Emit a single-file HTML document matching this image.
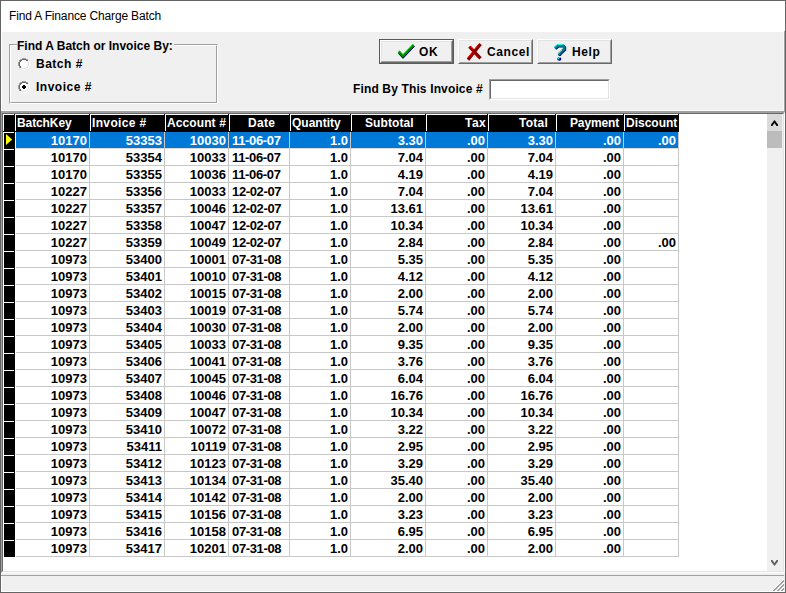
<!DOCTYPE html>
<html><head><meta charset="utf-8"><style>
*{box-sizing:border-box;margin:0;padding:0}
html,body{width:786px;height:593px;overflow:hidden;background:#f0f0f0}
body{position:relative;font-family:"Liberation Sans",sans-serif;}
.a{position:absolute}
.b{font-weight:bold;font-size:12px;color:#000;white-space:pre}
.hd{position:absolute;top:114px;height:17px;background:#000;border-left:1px solid #fff;border-top:1px solid #fff;color:#fff;font-weight:bold;font-size:12px;line-height:16px;white-space:pre;overflow:hidden}
.c{position:absolute;height:16px;line-height:16px;font-weight:bold;font-size:13px;white-space:pre;overflow:hidden}
.btn{position:absolute;top:39px;width:75px;height:25px;background:#f0f0f0}
</style></head><body>

<div class="a" style="left:0;top:0;width:786px;height:593px;border:1px solid #646464"></div>
<div class="a" style="left:1px;top:1px;width:784px;height:31px;background:#fff"></div>
<div class="a" style="left:9px;top:8px;font-size:12px;letter-spacing:-0.15px;line-height:16px;color:#000;white-space:pre">Find A Finance Charge Batch</div>
<div class="a" style="left:1px;top:32px;width:1px;height:560px;background:#fff"></div>
<div class="a" style="left:783px;top:32px;width:1px;height:79px;background:#fafafa"></div>
<div class="a" style="left:784px;top:31px;width:1px;height:80px;background:#a0a0a0"></div>
<div class="a" style="left:9px;top:44px;width:209px;height:60px;border:1px solid #a0a0a0;border-right-color:#fff;border-bottom-color:#fff"></div>
<div class="a" style="left:10px;top:45px;width:207px;height:58px;border:1px solid #fff;border-right-color:#a0a0a0;border-bottom-color:#a0a0a0"></div>
<div class="a b" style="left:17px;top:38px;line-height:16px;background:#f0f0f0;padding:0 1px 0 0">Find A Batch or Invoice By:</div>
<svg class="a" style="left:18px;top:58px" width="12" height="12" viewBox="0 0 12 12" shape-rendering="crispEdges"><rect x="4" y="2" width="4" height="1" fill="#fff"/><rect x="3" y="3" width="6" height="1" fill="#fff"/><rect x="2" y="4" width="8" height="1" fill="#fff"/><rect x="2" y="5" width="8" height="1" fill="#fff"/><rect x="2" y="6" width="8" height="1" fill="#fff"/><rect x="2" y="7" width="8" height="1" fill="#fff"/><rect x="3" y="8" width="6" height="1" fill="#fff"/><rect x="4" y="9" width="4" height="1" fill="#fff"/><rect x="4" y="0" width="1" height="1" fill="#a0a0a0"/><rect x="5" y="0" width="1" height="1" fill="#a0a0a0"/><rect x="6" y="0" width="1" height="1" fill="#a0a0a0"/><rect x="7" y="0" width="1" height="1" fill="#a0a0a0"/><rect x="2" y="1" width="1" height="1" fill="#a0a0a0"/><rect x="3" y="1" width="1" height="1" fill="#a0a0a0"/><rect x="8" y="1" width="1" height="1" fill="#a0a0a0"/><rect x="9" y="1" width="1" height="1" fill="#a0a0a0"/><rect x="1" y="2" width="1" height="1" fill="#a0a0a0"/><rect x="10" y="2" width="1" height="1" fill="#ffffff"/><rect x="1" y="3" width="1" height="1" fill="#a0a0a0"/><rect x="10" y="3" width="1" height="1" fill="#ffffff"/><rect x="0" y="4" width="1" height="1" fill="#a0a0a0"/><rect x="11" y="4" width="1" height="1" fill="#ffffff"/><rect x="0" y="5" width="1" height="1" fill="#a0a0a0"/><rect x="11" y="5" width="1" height="1" fill="#ffffff"/><rect x="0" y="6" width="1" height="1" fill="#a0a0a0"/><rect x="11" y="6" width="1" height="1" fill="#ffffff"/><rect x="0" y="7" width="1" height="1" fill="#a0a0a0"/><rect x="11" y="7" width="1" height="1" fill="#ffffff"/><rect x="1" y="8" width="1" height="1" fill="#a0a0a0"/><rect x="10" y="8" width="1" height="1" fill="#ffffff"/><rect x="1" y="9" width="1" height="1" fill="#a0a0a0"/><rect x="10" y="9" width="1" height="1" fill="#ffffff"/><rect x="2" y="10" width="1" height="1" fill="#ffffff"/><rect x="3" y="10" width="1" height="1" fill="#ffffff"/><rect x="8" y="10" width="1" height="1" fill="#ffffff"/><rect x="9" y="10" width="1" height="1" fill="#ffffff"/><rect x="4" y="11" width="1" height="1" fill="#ffffff"/><rect x="5" y="11" width="1" height="1" fill="#ffffff"/><rect x="6" y="11" width="1" height="1" fill="#ffffff"/><rect x="7" y="11" width="1" height="1" fill="#ffffff"/><rect x="4" y="1" width="1" height="1" fill="#696969"/><rect x="5" y="1" width="1" height="1" fill="#696969"/><rect x="6" y="1" width="1" height="1" fill="#696969"/><rect x="7" y="1" width="1" height="1" fill="#696969"/><rect x="2" y="2" width="1" height="1" fill="#696969"/><rect x="3" y="2" width="1" height="1" fill="#696969"/><rect x="8" y="2" width="1" height="1" fill="#696969"/><rect x="9" y="2" width="1" height="1" fill="#696969"/><rect x="2" y="3" width="1" height="1" fill="#696969"/><rect x="9" y="3" width="1" height="1" fill="#e3e3e3"/><rect x="1" y="4" width="1" height="1" fill="#696969"/><rect x="10" y="4" width="1" height="1" fill="#e3e3e3"/><rect x="1" y="5" width="1" height="1" fill="#696969"/><rect x="10" y="5" width="1" height="1" fill="#e3e3e3"/><rect x="1" y="6" width="1" height="1" fill="#696969"/><rect x="10" y="6" width="1" height="1" fill="#e3e3e3"/><rect x="1" y="7" width="1" height="1" fill="#696969"/><rect x="10" y="7" width="1" height="1" fill="#e3e3e3"/><rect x="2" y="8" width="1" height="1" fill="#696969"/><rect x="9" y="8" width="1" height="1" fill="#e3e3e3"/><rect x="2" y="9" width="1" height="1" fill="#696969"/><rect x="3" y="9" width="1" height="1" fill="#e3e3e3"/><rect x="8" y="9" width="1" height="1" fill="#e3e3e3"/><rect x="9" y="9" width="1" height="1" fill="#e3e3e3"/><rect x="4" y="10" width="1" height="1" fill="#e3e3e3"/><rect x="5" y="10" width="1" height="1" fill="#e3e3e3"/><rect x="6" y="10" width="1" height="1" fill="#e3e3e3"/><rect x="7" y="10" width="1" height="1" fill="#e3e3e3"/></svg>
<svg class="a" style="left:18px;top:81px" width="12" height="12" viewBox="0 0 12 12" shape-rendering="crispEdges"><rect x="4" y="2" width="4" height="1" fill="#fff"/><rect x="3" y="3" width="6" height="1" fill="#fff"/><rect x="2" y="4" width="8" height="1" fill="#fff"/><rect x="2" y="5" width="8" height="1" fill="#fff"/><rect x="2" y="6" width="8" height="1" fill="#fff"/><rect x="2" y="7" width="8" height="1" fill="#fff"/><rect x="3" y="8" width="6" height="1" fill="#fff"/><rect x="4" y="9" width="4" height="1" fill="#fff"/><rect x="4" y="0" width="1" height="1" fill="#a0a0a0"/><rect x="5" y="0" width="1" height="1" fill="#a0a0a0"/><rect x="6" y="0" width="1" height="1" fill="#a0a0a0"/><rect x="7" y="0" width="1" height="1" fill="#a0a0a0"/><rect x="2" y="1" width="1" height="1" fill="#a0a0a0"/><rect x="3" y="1" width="1" height="1" fill="#a0a0a0"/><rect x="8" y="1" width="1" height="1" fill="#a0a0a0"/><rect x="9" y="1" width="1" height="1" fill="#a0a0a0"/><rect x="1" y="2" width="1" height="1" fill="#a0a0a0"/><rect x="10" y="2" width="1" height="1" fill="#ffffff"/><rect x="1" y="3" width="1" height="1" fill="#a0a0a0"/><rect x="10" y="3" width="1" height="1" fill="#ffffff"/><rect x="0" y="4" width="1" height="1" fill="#a0a0a0"/><rect x="11" y="4" width="1" height="1" fill="#ffffff"/><rect x="0" y="5" width="1" height="1" fill="#a0a0a0"/><rect x="11" y="5" width="1" height="1" fill="#ffffff"/><rect x="0" y="6" width="1" height="1" fill="#a0a0a0"/><rect x="11" y="6" width="1" height="1" fill="#ffffff"/><rect x="0" y="7" width="1" height="1" fill="#a0a0a0"/><rect x="11" y="7" width="1" height="1" fill="#ffffff"/><rect x="1" y="8" width="1" height="1" fill="#a0a0a0"/><rect x="10" y="8" width="1" height="1" fill="#ffffff"/><rect x="1" y="9" width="1" height="1" fill="#a0a0a0"/><rect x="10" y="9" width="1" height="1" fill="#ffffff"/><rect x="2" y="10" width="1" height="1" fill="#ffffff"/><rect x="3" y="10" width="1" height="1" fill="#ffffff"/><rect x="8" y="10" width="1" height="1" fill="#ffffff"/><rect x="9" y="10" width="1" height="1" fill="#ffffff"/><rect x="4" y="11" width="1" height="1" fill="#ffffff"/><rect x="5" y="11" width="1" height="1" fill="#ffffff"/><rect x="6" y="11" width="1" height="1" fill="#ffffff"/><rect x="7" y="11" width="1" height="1" fill="#ffffff"/><rect x="4" y="1" width="1" height="1" fill="#696969"/><rect x="5" y="1" width="1" height="1" fill="#696969"/><rect x="6" y="1" width="1" height="1" fill="#696969"/><rect x="7" y="1" width="1" height="1" fill="#696969"/><rect x="2" y="2" width="1" height="1" fill="#696969"/><rect x="3" y="2" width="1" height="1" fill="#696969"/><rect x="8" y="2" width="1" height="1" fill="#696969"/><rect x="9" y="2" width="1" height="1" fill="#696969"/><rect x="2" y="3" width="1" height="1" fill="#696969"/><rect x="9" y="3" width="1" height="1" fill="#e3e3e3"/><rect x="1" y="4" width="1" height="1" fill="#696969"/><rect x="10" y="4" width="1" height="1" fill="#e3e3e3"/><rect x="1" y="5" width="1" height="1" fill="#696969"/><rect x="10" y="5" width="1" height="1" fill="#e3e3e3"/><rect x="1" y="6" width="1" height="1" fill="#696969"/><rect x="10" y="6" width="1" height="1" fill="#e3e3e3"/><rect x="1" y="7" width="1" height="1" fill="#696969"/><rect x="10" y="7" width="1" height="1" fill="#e3e3e3"/><rect x="2" y="8" width="1" height="1" fill="#696969"/><rect x="9" y="8" width="1" height="1" fill="#e3e3e3"/><rect x="2" y="9" width="1" height="1" fill="#696969"/><rect x="3" y="9" width="1" height="1" fill="#e3e3e3"/><rect x="8" y="9" width="1" height="1" fill="#e3e3e3"/><rect x="9" y="9" width="1" height="1" fill="#e3e3e3"/><rect x="4" y="10" width="1" height="1" fill="#e3e3e3"/><rect x="5" y="10" width="1" height="1" fill="#e3e3e3"/><rect x="6" y="10" width="1" height="1" fill="#e3e3e3"/><rect x="7" y="10" width="1" height="1" fill="#e3e3e3"/><rect x="5" y="4" width="2" height="4" fill="#000"/><rect x="4" y="5" width="4" height="2" fill="#000"/></svg>
<div class="a b" style="left:36px;top:56px;line-height:16px;letter-spacing:0.5px">Batch #</div>
<div class="a b" style="left:36px;top:79px;line-height:16px;letter-spacing:0.5px">Invoice #</div>
<div class="btn" style="left:379px"><div class="a" style="left:0;top:0;width:75px;height:25px;border:1px solid #5a5a5a"></div><div class="a" style="left:1px;top:1px;width:73px;height:23px;border-top:1px solid #fff;border-left:1px solid #fff;border-right:1px solid #696969;border-bottom:1px solid #696969"></div><div class="a" style="left:2px;top:2px;width:71px;height:21px;border-top:1px solid #e3e3e3;border-left:1px solid #e3e3e3;border-right:1px solid #a0a0a0;border-bottom:1px solid #a0a0a0"></div><div class="a b" style="left:40px;top:5px;line-height:16px;letter-spacing:0.6px">OK</div></div>
<div class="btn" style="left:458px"><div class="a" style="left:0;top:0;width:75px;height:25px;border-top:1px solid #fff;border-left:1px solid #fff;border-right:1px solid #696969;border-bottom:1px solid #696969"></div><div class="a" style="left:1px;top:1px;width:73px;height:23px;border-top:1px solid #e3e3e3;border-left:1px solid #e3e3e3;border-right:1px solid #a0a0a0;border-bottom:1px solid #a0a0a0"></div><div class="a b" style="left:29px;top:5px;line-height:16px;letter-spacing:0.6px">Cancel</div></div>
<div class="btn" style="left:537px"><div class="a" style="left:0;top:0;width:75px;height:25px;border-top:1px solid #fff;border-left:1px solid #fff;border-right:1px solid #696969;border-bottom:1px solid #696969"></div><div class="a" style="left:1px;top:1px;width:73px;height:23px;border-top:1px solid #e3e3e3;border-left:1px solid #e3e3e3;border-right:1px solid #a0a0a0;border-bottom:1px solid #a0a0a0"></div><div class="a b" style="left:35px;top:5px;line-height:16px;letter-spacing:0.6px">Help</div></div>
<svg class="a" style="left:390px;top:40px" width="30" height="24" viewBox="390 40 30 24"><path d="M397.8 52.4 L399.6 50.6 L403 54.2 L412.8 44 L414.8 46.2 L403 58.8 Z" fill="#008000"/><path d="M398.3 53.4 L403 58.3 L414.5 46.4" fill="none" stroke="#000080" stroke-width="1"/><path d="M398.2 52.1 L399.6 50.9 L403 54.6 L412.9 44.4" fill="none" stroke="#00ff00" stroke-width="0.9"/></svg>
<svg class="a" style="left:462px;top:40px" width="24" height="24" viewBox="462 40 24 24"><path d="M479.6 45.2 L469 58.6" fill="none" stroke="#800000" stroke-width="3.2" stroke-linecap="square"/><path d="M470.6 47.9 L479.4 57.2" fill="none" stroke="#800000" stroke-width="3.2" stroke-linecap="square"/><path d="M467.8 57.8 L473.2 51.2 M474.8 49 L478.6 44.4" fill="none" stroke="#ff0000" stroke-width="1"/><path d="M468.7 47.6 L470.2 46.2 L473.5 49.5 M474.2 53.6 L478 57.6" fill="none" stroke="#ff0000" stroke-width="1"/></svg>
<svg class="a" style="left:549px;top:40px" width="22" height="24" viewBox="549 40 22 24"><path d="M555.5 48.9 L558.5 46.2 L563.7 46.2 L564.9 47.5 L564.9 49.7 L559.9 54.5 L559.9 56" fill="none" stroke="#000080" stroke-width="2.6"/><path d="M554.8 48.2 L557.8 45.5 L563 45.5 L564.2 46.8 L564.2 49 L559.2 53.8 L559.2 55.3" fill="none" stroke="#008080" stroke-width="2.6"/><path d="M554 47.4 L557.5 44.5 L562.8 44.5 M558.2 53.8 L562 50" fill="none" stroke="#00ffff" stroke-width="1"/><ellipse cx="559.3" cy="59" rx="2.1" ry="1.7" fill="#000080"/><path d="M557.6 59.4 L559.8 57.2" stroke="#00ffff" stroke-width="1.1"/></svg>
<div class="a b" style="left:353px;top:81px;line-height:16px;letter-spacing:0.14px">Find By This Invoice #</div>
<div class="a" style="left:489px;top:79px;width:121px;height:21px;background:#fff;border-top:1px solid #a0a0a0;border-left:1px solid #a0a0a0;border-right:1px solid #fff;border-bottom:1px solid #fff"></div>
<div class="a" style="left:490px;top:80px;width:119px;height:19px;border-top:1px solid #696969;border-left:1px solid #696969;border-right:1px solid #e3e3e3;border-bottom:1px solid #e3e3e3"></div>
<div class="a" style="left:1px;top:110px;width:783px;height:1px;background:#f8f8f8"></div><div class="a" style="left:1px;top:111px;width:784px;height:1px;background:#a0a0a0"></div>
<div class="a" style="left:1px;top:112px;width:784px;height:461px;border-top:1px solid #a0a0a0;border-left:1px solid #a0a0a0;border-right:1px solid #fff;border-bottom:1px solid #fff"></div>
<div class="a" style="left:2px;top:113px;width:782px;height:459px;border-top:1px solid #696969;border-left:1px solid #696969;border-right:1px solid #e3e3e3;border-bottom:1px solid #e3e3e3;background:#fff"></div>

<div class="a" style="left:3px;top:114px;width:12px;height:443px;background:#000"></div>
<div class="a" style="left:3px;top:114px;width:11px;height:17px;border-left:1px solid #fff;border-top:1px solid #fff"></div>
<div class="a" style="left:3px;top:132px;width:11px;height:17px;border-left:1px solid #fff;border-top:1px solid #fff"></div>
<div class="a" style="left:3px;top:149px;width:11px;height:17px;border-left:1px solid #fff;border-top:1px solid #fff"></div>
<div class="a" style="left:3px;top:166px;width:11px;height:17px;border-left:1px solid #fff;border-top:1px solid #fff"></div>
<div class="a" style="left:3px;top:183px;width:11px;height:17px;border-left:1px solid #fff;border-top:1px solid #fff"></div>
<div class="a" style="left:3px;top:200px;width:11px;height:17px;border-left:1px solid #fff;border-top:1px solid #fff"></div>
<div class="a" style="left:3px;top:217px;width:11px;height:17px;border-left:1px solid #fff;border-top:1px solid #fff"></div>
<div class="a" style="left:3px;top:234px;width:11px;height:17px;border-left:1px solid #fff;border-top:1px solid #fff"></div>
<div class="a" style="left:3px;top:251px;width:11px;height:17px;border-left:1px solid #fff;border-top:1px solid #fff"></div>
<div class="a" style="left:3px;top:268px;width:11px;height:17px;border-left:1px solid #fff;border-top:1px solid #fff"></div>
<div class="a" style="left:3px;top:285px;width:11px;height:17px;border-left:1px solid #fff;border-top:1px solid #fff"></div>
<div class="a" style="left:3px;top:302px;width:11px;height:17px;border-left:1px solid #fff;border-top:1px solid #fff"></div>
<div class="a" style="left:3px;top:319px;width:11px;height:17px;border-left:1px solid #fff;border-top:1px solid #fff"></div>
<div class="a" style="left:3px;top:336px;width:11px;height:17px;border-left:1px solid #fff;border-top:1px solid #fff"></div>
<div class="a" style="left:3px;top:353px;width:11px;height:17px;border-left:1px solid #fff;border-top:1px solid #fff"></div>
<div class="a" style="left:3px;top:370px;width:11px;height:17px;border-left:1px solid #fff;border-top:1px solid #fff"></div>
<div class="a" style="left:3px;top:387px;width:11px;height:17px;border-left:1px solid #fff;border-top:1px solid #fff"></div>
<div class="a" style="left:3px;top:404px;width:11px;height:17px;border-left:1px solid #fff;border-top:1px solid #fff"></div>
<div class="a" style="left:3px;top:421px;width:11px;height:17px;border-left:1px solid #fff;border-top:1px solid #fff"></div>
<div class="a" style="left:3px;top:438px;width:11px;height:17px;border-left:1px solid #fff;border-top:1px solid #fff"></div>
<div class="a" style="left:3px;top:455px;width:11px;height:17px;border-left:1px solid #fff;border-top:1px solid #fff"></div>
<div class="a" style="left:3px;top:472px;width:11px;height:17px;border-left:1px solid #fff;border-top:1px solid #fff"></div>
<div class="a" style="left:3px;top:489px;width:11px;height:17px;border-left:1px solid #fff;border-top:1px solid #fff"></div>
<div class="a" style="left:3px;top:506px;width:11px;height:17px;border-left:1px solid #fff;border-top:1px solid #fff"></div>
<div class="a" style="left:3px;top:523px;width:11px;height:17px;border-left:1px solid #fff;border-top:1px solid #fff"></div>
<div class="a" style="left:3px;top:540px;width:11px;height:17px;border-left:1px solid #fff;border-top:1px solid #fff"></div>
<svg class="a" style="left:6px;top:134px" width="7" height="11" viewBox="0 0 7 11"><path d="M0 0 L6.2 5.5 L0 11 Z" fill="#ffff00"/></svg>
<div class="hd" style="left:15px;width:74px"></div>
<div class="a" style="left:89px;top:114px;width:1px;height:18px;background:#000"></div>
<div class="a" style="left:17px;top:115px;color:#fff;font-weight:bold;font-size:12px;line-height:16px;white-space:pre;letter-spacing:-0.1px">BatchKey</div>
<div class="hd" style="left:90px;width:74px"></div>
<div class="a" style="left:164px;top:114px;width:1px;height:18px;background:#000"></div>
<div class="a" style="left:92px;top:115px;color:#fff;font-weight:bold;font-size:12px;line-height:16px;white-space:pre;letter-spacing:0.35px">Invoice #</div>
<div class="hd" style="left:165px;width:63px"></div>
<div class="a" style="left:228px;top:114px;width:1px;height:18px;background:#000"></div>
<div class="a" style="left:167px;top:115px;color:#fff;font-weight:bold;font-size:12px;line-height:16px;white-space:pre;letter-spacing:0.1px">Account #</div>
<div class="hd" style="left:229px;width:60px"></div>
<div class="a" style="left:289px;top:114px;width:1px;height:18px;background:#000"></div>
<div class="a" style="left:248px;top:115px;color:#fff;font-weight:bold;font-size:12px;line-height:16px;white-space:pre;letter-spacing:0.3px">Date</div>
<div class="hd" style="left:290px;width:60px"></div>
<div class="a" style="left:350px;top:114px;width:1px;height:18px;background:#000"></div>
<div class="a" style="left:292px;top:115px;color:#fff;font-weight:bold;font-size:12px;line-height:16px;white-space:pre;letter-spacing:0px">Quantity</div>
<div class="hd" style="left:351px;width:74px"></div>
<div class="a" style="left:425px;top:114px;width:1px;height:18px;background:#000"></div>
<div class="a" style="left:365px;top:115px;color:#fff;font-weight:bold;font-size:12px;line-height:16px;white-space:pre;letter-spacing:0.1px">Subtotal</div>
<div class="hd" style="left:426px;width:61px"></div>
<div class="a" style="left:487px;top:114px;width:1px;height:18px;background:#000"></div>
<div class="a" style="left:465px;top:115px;color:#fff;font-weight:bold;font-size:12px;line-height:16px;white-space:pre;letter-spacing:0.5px">Tax</div>
<div class="hd" style="left:488px;width:67px"></div>
<div class="a" style="left:555px;top:114px;width:1px;height:18px;background:#000"></div>
<div class="a" style="left:519px;top:115px;color:#fff;font-weight:bold;font-size:12px;line-height:16px;white-space:pre;letter-spacing:0.25px">Total</div>
<div class="hd" style="left:556px;width:67px"></div>
<div class="a" style="left:623px;top:114px;width:1px;height:18px;background:#000"></div>
<div class="a" style="left:570px;top:115px;color:#fff;font-weight:bold;font-size:12px;line-height:16px;white-space:pre;letter-spacing:-0.15px">Payment</div>
<div class="hd" style="left:624px;width:54px"></div>
<div class="a" style="left:678px;top:114px;width:1px;height:18px;background:#000"></div>
<div class="a" style="left:626px;top:115px;color:#fff;font-weight:bold;font-size:12px;line-height:16px;white-space:pre;letter-spacing:0px">Discount</div>
<div class="a" style="left:15px;top:131px;width:664px;height:1px;background:#000"></div>
<div class="a" style="left:16px;top:132px;width:662px;height:16px;background:#0078d7"></div>
<div class="c" style="left:16px;top:133px;width:73px;text-align:right;padding-right:2px;color:#fff">10170</div>
<div class="c" style="left:90px;top:133px;width:74px;text-align:right;padding-right:2px;color:#fff">53353</div>
<div class="c" style="left:165px;top:133px;width:63px;text-align:right;padding-right:2px;color:#fff">10030</div>
<div class="c" style="left:229px;top:133px;width:60px;text-align:left;padding-left:3px;color:#fff;letter-spacing:-0.35px">11-06-07</div>
<div class="c" style="left:290px;top:133px;width:60px;text-align:right;padding-right:2px;color:#fff">1.0</div>
<div class="c" style="left:351px;top:133px;width:74px;text-align:right;padding-right:2px;color:#fff">3.30</div>
<div class="c" style="left:426px;top:133px;width:61px;text-align:right;padding-right:2px;color:#fff">.00</div>
<div class="c" style="left:488px;top:133px;width:67px;text-align:right;padding-right:2px;color:#fff">3.30</div>
<div class="c" style="left:556px;top:133px;width:67px;text-align:right;padding-right:2px;color:#fff">.00</div>
<div class="c" style="left:624px;top:133px;width:54px;text-align:right;padding-right:2px;color:#fff">.00</div>
<div class="a" style="left:16px;top:148px;width:662px;height:1px;background:#e2dad2"></div>
<div class="c" style="left:16px;top:150px;width:73px;text-align:right;padding-right:2px;color:#000">10170</div>
<div class="c" style="left:90px;top:150px;width:74px;text-align:right;padding-right:2px;color:#000">53354</div>
<div class="c" style="left:165px;top:150px;width:63px;text-align:right;padding-right:2px;color:#000">10033</div>
<div class="c" style="left:229px;top:150px;width:60px;text-align:left;padding-left:3px;color:#000;letter-spacing:-0.35px">11-06-07</div>
<div class="c" style="left:290px;top:150px;width:60px;text-align:right;padding-right:2px;color:#000">1.0</div>
<div class="c" style="left:351px;top:150px;width:74px;text-align:right;padding-right:2px;color:#000">7.04</div>
<div class="c" style="left:426px;top:150px;width:61px;text-align:right;padding-right:2px;color:#000">.00</div>
<div class="c" style="left:488px;top:150px;width:67px;text-align:right;padding-right:2px;color:#000">7.04</div>
<div class="c" style="left:556px;top:150px;width:67px;text-align:right;padding-right:2px;color:#000">.00</div>
<div class="a" style="left:16px;top:165px;width:662px;height:1px;background:#c8c8c8"></div>
<div class="c" style="left:16px;top:167px;width:73px;text-align:right;padding-right:2px;color:#000">10170</div>
<div class="c" style="left:90px;top:167px;width:74px;text-align:right;padding-right:2px;color:#000">53355</div>
<div class="c" style="left:165px;top:167px;width:63px;text-align:right;padding-right:2px;color:#000">10036</div>
<div class="c" style="left:229px;top:167px;width:60px;text-align:left;padding-left:3px;color:#000;letter-spacing:-0.35px">11-06-07</div>
<div class="c" style="left:290px;top:167px;width:60px;text-align:right;padding-right:2px;color:#000">1.0</div>
<div class="c" style="left:351px;top:167px;width:74px;text-align:right;padding-right:2px;color:#000">4.19</div>
<div class="c" style="left:426px;top:167px;width:61px;text-align:right;padding-right:2px;color:#000">.00</div>
<div class="c" style="left:488px;top:167px;width:67px;text-align:right;padding-right:2px;color:#000">4.19</div>
<div class="c" style="left:556px;top:167px;width:67px;text-align:right;padding-right:2px;color:#000">.00</div>
<div class="a" style="left:16px;top:182px;width:662px;height:1px;background:#c8c8c8"></div>
<div class="c" style="left:16px;top:184px;width:73px;text-align:right;padding-right:2px;color:#000">10227</div>
<div class="c" style="left:90px;top:184px;width:74px;text-align:right;padding-right:2px;color:#000">53356</div>
<div class="c" style="left:165px;top:184px;width:63px;text-align:right;padding-right:2px;color:#000">10033</div>
<div class="c" style="left:229px;top:184px;width:60px;text-align:left;padding-left:3px;color:#000;letter-spacing:-0.35px">12-02-07</div>
<div class="c" style="left:290px;top:184px;width:60px;text-align:right;padding-right:2px;color:#000">1.0</div>
<div class="c" style="left:351px;top:184px;width:74px;text-align:right;padding-right:2px;color:#000">7.04</div>
<div class="c" style="left:426px;top:184px;width:61px;text-align:right;padding-right:2px;color:#000">.00</div>
<div class="c" style="left:488px;top:184px;width:67px;text-align:right;padding-right:2px;color:#000">7.04</div>
<div class="c" style="left:556px;top:184px;width:67px;text-align:right;padding-right:2px;color:#000">.00</div>
<div class="a" style="left:16px;top:199px;width:662px;height:1px;background:#c8c8c8"></div>
<div class="c" style="left:16px;top:201px;width:73px;text-align:right;padding-right:2px;color:#000">10227</div>
<div class="c" style="left:90px;top:201px;width:74px;text-align:right;padding-right:2px;color:#000">53357</div>
<div class="c" style="left:165px;top:201px;width:63px;text-align:right;padding-right:2px;color:#000">10046</div>
<div class="c" style="left:229px;top:201px;width:60px;text-align:left;padding-left:3px;color:#000;letter-spacing:-0.35px">12-02-07</div>
<div class="c" style="left:290px;top:201px;width:60px;text-align:right;padding-right:2px;color:#000">1.0</div>
<div class="c" style="left:351px;top:201px;width:74px;text-align:right;padding-right:2px;color:#000">13.61</div>
<div class="c" style="left:426px;top:201px;width:61px;text-align:right;padding-right:2px;color:#000">.00</div>
<div class="c" style="left:488px;top:201px;width:67px;text-align:right;padding-right:2px;color:#000">13.61</div>
<div class="c" style="left:556px;top:201px;width:67px;text-align:right;padding-right:2px;color:#000">.00</div>
<div class="a" style="left:16px;top:216px;width:662px;height:1px;background:#c8c8c8"></div>
<div class="c" style="left:16px;top:218px;width:73px;text-align:right;padding-right:2px;color:#000">10227</div>
<div class="c" style="left:90px;top:218px;width:74px;text-align:right;padding-right:2px;color:#000">53358</div>
<div class="c" style="left:165px;top:218px;width:63px;text-align:right;padding-right:2px;color:#000">10047</div>
<div class="c" style="left:229px;top:218px;width:60px;text-align:left;padding-left:3px;color:#000;letter-spacing:-0.35px">12-02-07</div>
<div class="c" style="left:290px;top:218px;width:60px;text-align:right;padding-right:2px;color:#000">1.0</div>
<div class="c" style="left:351px;top:218px;width:74px;text-align:right;padding-right:2px;color:#000">10.34</div>
<div class="c" style="left:426px;top:218px;width:61px;text-align:right;padding-right:2px;color:#000">.00</div>
<div class="c" style="left:488px;top:218px;width:67px;text-align:right;padding-right:2px;color:#000">10.34</div>
<div class="c" style="left:556px;top:218px;width:67px;text-align:right;padding-right:2px;color:#000">.00</div>
<div class="a" style="left:16px;top:233px;width:662px;height:1px;background:#c8c8c8"></div>
<div class="c" style="left:16px;top:235px;width:73px;text-align:right;padding-right:2px;color:#000">10227</div>
<div class="c" style="left:90px;top:235px;width:74px;text-align:right;padding-right:2px;color:#000">53359</div>
<div class="c" style="left:165px;top:235px;width:63px;text-align:right;padding-right:2px;color:#000">10049</div>
<div class="c" style="left:229px;top:235px;width:60px;text-align:left;padding-left:3px;color:#000;letter-spacing:-0.35px">12-02-07</div>
<div class="c" style="left:290px;top:235px;width:60px;text-align:right;padding-right:2px;color:#000">1.0</div>
<div class="c" style="left:351px;top:235px;width:74px;text-align:right;padding-right:2px;color:#000">2.84</div>
<div class="c" style="left:426px;top:235px;width:61px;text-align:right;padding-right:2px;color:#000">.00</div>
<div class="c" style="left:488px;top:235px;width:67px;text-align:right;padding-right:2px;color:#000">2.84</div>
<div class="c" style="left:556px;top:235px;width:67px;text-align:right;padding-right:2px;color:#000">.00</div>
<div class="c" style="left:624px;top:235px;width:54px;text-align:right;padding-right:2px;color:#000">.00</div>
<div class="a" style="left:16px;top:250px;width:662px;height:1px;background:#c8c8c8"></div>
<div class="c" style="left:16px;top:252px;width:73px;text-align:right;padding-right:2px;color:#000">10973</div>
<div class="c" style="left:90px;top:252px;width:74px;text-align:right;padding-right:2px;color:#000">53400</div>
<div class="c" style="left:165px;top:252px;width:63px;text-align:right;padding-right:2px;color:#000">10001</div>
<div class="c" style="left:229px;top:252px;width:60px;text-align:left;padding-left:3px;color:#000;letter-spacing:-0.35px">07-31-08</div>
<div class="c" style="left:290px;top:252px;width:60px;text-align:right;padding-right:2px;color:#000">1.0</div>
<div class="c" style="left:351px;top:252px;width:74px;text-align:right;padding-right:2px;color:#000">5.35</div>
<div class="c" style="left:426px;top:252px;width:61px;text-align:right;padding-right:2px;color:#000">.00</div>
<div class="c" style="left:488px;top:252px;width:67px;text-align:right;padding-right:2px;color:#000">5.35</div>
<div class="c" style="left:556px;top:252px;width:67px;text-align:right;padding-right:2px;color:#000">.00</div>
<div class="a" style="left:16px;top:267px;width:662px;height:1px;background:#c8c8c8"></div>
<div class="c" style="left:16px;top:269px;width:73px;text-align:right;padding-right:2px;color:#000">10973</div>
<div class="c" style="left:90px;top:269px;width:74px;text-align:right;padding-right:2px;color:#000">53401</div>
<div class="c" style="left:165px;top:269px;width:63px;text-align:right;padding-right:2px;color:#000">10010</div>
<div class="c" style="left:229px;top:269px;width:60px;text-align:left;padding-left:3px;color:#000;letter-spacing:-0.35px">07-31-08</div>
<div class="c" style="left:290px;top:269px;width:60px;text-align:right;padding-right:2px;color:#000">1.0</div>
<div class="c" style="left:351px;top:269px;width:74px;text-align:right;padding-right:2px;color:#000">4.12</div>
<div class="c" style="left:426px;top:269px;width:61px;text-align:right;padding-right:2px;color:#000">.00</div>
<div class="c" style="left:488px;top:269px;width:67px;text-align:right;padding-right:2px;color:#000">4.12</div>
<div class="c" style="left:556px;top:269px;width:67px;text-align:right;padding-right:2px;color:#000">.00</div>
<div class="a" style="left:16px;top:284px;width:662px;height:1px;background:#c8c8c8"></div>
<div class="c" style="left:16px;top:286px;width:73px;text-align:right;padding-right:2px;color:#000">10973</div>
<div class="c" style="left:90px;top:286px;width:74px;text-align:right;padding-right:2px;color:#000">53402</div>
<div class="c" style="left:165px;top:286px;width:63px;text-align:right;padding-right:2px;color:#000">10015</div>
<div class="c" style="left:229px;top:286px;width:60px;text-align:left;padding-left:3px;color:#000;letter-spacing:-0.35px">07-31-08</div>
<div class="c" style="left:290px;top:286px;width:60px;text-align:right;padding-right:2px;color:#000">1.0</div>
<div class="c" style="left:351px;top:286px;width:74px;text-align:right;padding-right:2px;color:#000">2.00</div>
<div class="c" style="left:426px;top:286px;width:61px;text-align:right;padding-right:2px;color:#000">.00</div>
<div class="c" style="left:488px;top:286px;width:67px;text-align:right;padding-right:2px;color:#000">2.00</div>
<div class="c" style="left:556px;top:286px;width:67px;text-align:right;padding-right:2px;color:#000">.00</div>
<div class="a" style="left:16px;top:301px;width:662px;height:1px;background:#c8c8c8"></div>
<div class="c" style="left:16px;top:303px;width:73px;text-align:right;padding-right:2px;color:#000">10973</div>
<div class="c" style="left:90px;top:303px;width:74px;text-align:right;padding-right:2px;color:#000">53403</div>
<div class="c" style="left:165px;top:303px;width:63px;text-align:right;padding-right:2px;color:#000">10019</div>
<div class="c" style="left:229px;top:303px;width:60px;text-align:left;padding-left:3px;color:#000;letter-spacing:-0.35px">07-31-08</div>
<div class="c" style="left:290px;top:303px;width:60px;text-align:right;padding-right:2px;color:#000">1.0</div>
<div class="c" style="left:351px;top:303px;width:74px;text-align:right;padding-right:2px;color:#000">5.74</div>
<div class="c" style="left:426px;top:303px;width:61px;text-align:right;padding-right:2px;color:#000">.00</div>
<div class="c" style="left:488px;top:303px;width:67px;text-align:right;padding-right:2px;color:#000">5.74</div>
<div class="c" style="left:556px;top:303px;width:67px;text-align:right;padding-right:2px;color:#000">.00</div>
<div class="a" style="left:16px;top:318px;width:662px;height:1px;background:#c8c8c8"></div>
<div class="c" style="left:16px;top:320px;width:73px;text-align:right;padding-right:2px;color:#000">10973</div>
<div class="c" style="left:90px;top:320px;width:74px;text-align:right;padding-right:2px;color:#000">53404</div>
<div class="c" style="left:165px;top:320px;width:63px;text-align:right;padding-right:2px;color:#000">10030</div>
<div class="c" style="left:229px;top:320px;width:60px;text-align:left;padding-left:3px;color:#000;letter-spacing:-0.35px">07-31-08</div>
<div class="c" style="left:290px;top:320px;width:60px;text-align:right;padding-right:2px;color:#000">1.0</div>
<div class="c" style="left:351px;top:320px;width:74px;text-align:right;padding-right:2px;color:#000">2.00</div>
<div class="c" style="left:426px;top:320px;width:61px;text-align:right;padding-right:2px;color:#000">.00</div>
<div class="c" style="left:488px;top:320px;width:67px;text-align:right;padding-right:2px;color:#000">2.00</div>
<div class="c" style="left:556px;top:320px;width:67px;text-align:right;padding-right:2px;color:#000">.00</div>
<div class="a" style="left:16px;top:335px;width:662px;height:1px;background:#c8c8c8"></div>
<div class="c" style="left:16px;top:337px;width:73px;text-align:right;padding-right:2px;color:#000">10973</div>
<div class="c" style="left:90px;top:337px;width:74px;text-align:right;padding-right:2px;color:#000">53405</div>
<div class="c" style="left:165px;top:337px;width:63px;text-align:right;padding-right:2px;color:#000">10033</div>
<div class="c" style="left:229px;top:337px;width:60px;text-align:left;padding-left:3px;color:#000;letter-spacing:-0.35px">07-31-08</div>
<div class="c" style="left:290px;top:337px;width:60px;text-align:right;padding-right:2px;color:#000">1.0</div>
<div class="c" style="left:351px;top:337px;width:74px;text-align:right;padding-right:2px;color:#000">9.35</div>
<div class="c" style="left:426px;top:337px;width:61px;text-align:right;padding-right:2px;color:#000">.00</div>
<div class="c" style="left:488px;top:337px;width:67px;text-align:right;padding-right:2px;color:#000">9.35</div>
<div class="c" style="left:556px;top:337px;width:67px;text-align:right;padding-right:2px;color:#000">.00</div>
<div class="a" style="left:16px;top:352px;width:662px;height:1px;background:#c8c8c8"></div>
<div class="c" style="left:16px;top:354px;width:73px;text-align:right;padding-right:2px;color:#000">10973</div>
<div class="c" style="left:90px;top:354px;width:74px;text-align:right;padding-right:2px;color:#000">53406</div>
<div class="c" style="left:165px;top:354px;width:63px;text-align:right;padding-right:2px;color:#000">10041</div>
<div class="c" style="left:229px;top:354px;width:60px;text-align:left;padding-left:3px;color:#000;letter-spacing:-0.35px">07-31-08</div>
<div class="c" style="left:290px;top:354px;width:60px;text-align:right;padding-right:2px;color:#000">1.0</div>
<div class="c" style="left:351px;top:354px;width:74px;text-align:right;padding-right:2px;color:#000">3.76</div>
<div class="c" style="left:426px;top:354px;width:61px;text-align:right;padding-right:2px;color:#000">.00</div>
<div class="c" style="left:488px;top:354px;width:67px;text-align:right;padding-right:2px;color:#000">3.76</div>
<div class="c" style="left:556px;top:354px;width:67px;text-align:right;padding-right:2px;color:#000">.00</div>
<div class="a" style="left:16px;top:369px;width:662px;height:1px;background:#c8c8c8"></div>
<div class="c" style="left:16px;top:371px;width:73px;text-align:right;padding-right:2px;color:#000">10973</div>
<div class="c" style="left:90px;top:371px;width:74px;text-align:right;padding-right:2px;color:#000">53407</div>
<div class="c" style="left:165px;top:371px;width:63px;text-align:right;padding-right:2px;color:#000">10045</div>
<div class="c" style="left:229px;top:371px;width:60px;text-align:left;padding-left:3px;color:#000;letter-spacing:-0.35px">07-31-08</div>
<div class="c" style="left:290px;top:371px;width:60px;text-align:right;padding-right:2px;color:#000">1.0</div>
<div class="c" style="left:351px;top:371px;width:74px;text-align:right;padding-right:2px;color:#000">6.04</div>
<div class="c" style="left:426px;top:371px;width:61px;text-align:right;padding-right:2px;color:#000">.00</div>
<div class="c" style="left:488px;top:371px;width:67px;text-align:right;padding-right:2px;color:#000">6.04</div>
<div class="c" style="left:556px;top:371px;width:67px;text-align:right;padding-right:2px;color:#000">.00</div>
<div class="a" style="left:16px;top:386px;width:662px;height:1px;background:#c8c8c8"></div>
<div class="c" style="left:16px;top:388px;width:73px;text-align:right;padding-right:2px;color:#000">10973</div>
<div class="c" style="left:90px;top:388px;width:74px;text-align:right;padding-right:2px;color:#000">53408</div>
<div class="c" style="left:165px;top:388px;width:63px;text-align:right;padding-right:2px;color:#000">10046</div>
<div class="c" style="left:229px;top:388px;width:60px;text-align:left;padding-left:3px;color:#000;letter-spacing:-0.35px">07-31-08</div>
<div class="c" style="left:290px;top:388px;width:60px;text-align:right;padding-right:2px;color:#000">1.0</div>
<div class="c" style="left:351px;top:388px;width:74px;text-align:right;padding-right:2px;color:#000">16.76</div>
<div class="c" style="left:426px;top:388px;width:61px;text-align:right;padding-right:2px;color:#000">.00</div>
<div class="c" style="left:488px;top:388px;width:67px;text-align:right;padding-right:2px;color:#000">16.76</div>
<div class="c" style="left:556px;top:388px;width:67px;text-align:right;padding-right:2px;color:#000">.00</div>
<div class="a" style="left:16px;top:403px;width:662px;height:1px;background:#c8c8c8"></div>
<div class="c" style="left:16px;top:405px;width:73px;text-align:right;padding-right:2px;color:#000">10973</div>
<div class="c" style="left:90px;top:405px;width:74px;text-align:right;padding-right:2px;color:#000">53409</div>
<div class="c" style="left:165px;top:405px;width:63px;text-align:right;padding-right:2px;color:#000">10047</div>
<div class="c" style="left:229px;top:405px;width:60px;text-align:left;padding-left:3px;color:#000;letter-spacing:-0.35px">07-31-08</div>
<div class="c" style="left:290px;top:405px;width:60px;text-align:right;padding-right:2px;color:#000">1.0</div>
<div class="c" style="left:351px;top:405px;width:74px;text-align:right;padding-right:2px;color:#000">10.34</div>
<div class="c" style="left:426px;top:405px;width:61px;text-align:right;padding-right:2px;color:#000">.00</div>
<div class="c" style="left:488px;top:405px;width:67px;text-align:right;padding-right:2px;color:#000">10.34</div>
<div class="c" style="left:556px;top:405px;width:67px;text-align:right;padding-right:2px;color:#000">.00</div>
<div class="a" style="left:16px;top:420px;width:662px;height:1px;background:#c8c8c8"></div>
<div class="c" style="left:16px;top:422px;width:73px;text-align:right;padding-right:2px;color:#000">10973</div>
<div class="c" style="left:90px;top:422px;width:74px;text-align:right;padding-right:2px;color:#000">53410</div>
<div class="c" style="left:165px;top:422px;width:63px;text-align:right;padding-right:2px;color:#000">10072</div>
<div class="c" style="left:229px;top:422px;width:60px;text-align:left;padding-left:3px;color:#000;letter-spacing:-0.35px">07-31-08</div>
<div class="c" style="left:290px;top:422px;width:60px;text-align:right;padding-right:2px;color:#000">1.0</div>
<div class="c" style="left:351px;top:422px;width:74px;text-align:right;padding-right:2px;color:#000">3.22</div>
<div class="c" style="left:426px;top:422px;width:61px;text-align:right;padding-right:2px;color:#000">.00</div>
<div class="c" style="left:488px;top:422px;width:67px;text-align:right;padding-right:2px;color:#000">3.22</div>
<div class="c" style="left:556px;top:422px;width:67px;text-align:right;padding-right:2px;color:#000">.00</div>
<div class="a" style="left:16px;top:437px;width:662px;height:1px;background:#c8c8c8"></div>
<div class="c" style="left:16px;top:439px;width:73px;text-align:right;padding-right:2px;color:#000">10973</div>
<div class="c" style="left:90px;top:439px;width:74px;text-align:right;padding-right:2px;color:#000">53411</div>
<div class="c" style="left:165px;top:439px;width:63px;text-align:right;padding-right:2px;color:#000">10119</div>
<div class="c" style="left:229px;top:439px;width:60px;text-align:left;padding-left:3px;color:#000;letter-spacing:-0.35px">07-31-08</div>
<div class="c" style="left:290px;top:439px;width:60px;text-align:right;padding-right:2px;color:#000">1.0</div>
<div class="c" style="left:351px;top:439px;width:74px;text-align:right;padding-right:2px;color:#000">2.95</div>
<div class="c" style="left:426px;top:439px;width:61px;text-align:right;padding-right:2px;color:#000">.00</div>
<div class="c" style="left:488px;top:439px;width:67px;text-align:right;padding-right:2px;color:#000">2.95</div>
<div class="c" style="left:556px;top:439px;width:67px;text-align:right;padding-right:2px;color:#000">.00</div>
<div class="a" style="left:16px;top:454px;width:662px;height:1px;background:#c8c8c8"></div>
<div class="c" style="left:16px;top:456px;width:73px;text-align:right;padding-right:2px;color:#000">10973</div>
<div class="c" style="left:90px;top:456px;width:74px;text-align:right;padding-right:2px;color:#000">53412</div>
<div class="c" style="left:165px;top:456px;width:63px;text-align:right;padding-right:2px;color:#000">10123</div>
<div class="c" style="left:229px;top:456px;width:60px;text-align:left;padding-left:3px;color:#000;letter-spacing:-0.35px">07-31-08</div>
<div class="c" style="left:290px;top:456px;width:60px;text-align:right;padding-right:2px;color:#000">1.0</div>
<div class="c" style="left:351px;top:456px;width:74px;text-align:right;padding-right:2px;color:#000">3.29</div>
<div class="c" style="left:426px;top:456px;width:61px;text-align:right;padding-right:2px;color:#000">.00</div>
<div class="c" style="left:488px;top:456px;width:67px;text-align:right;padding-right:2px;color:#000">3.29</div>
<div class="c" style="left:556px;top:456px;width:67px;text-align:right;padding-right:2px;color:#000">.00</div>
<div class="a" style="left:16px;top:471px;width:662px;height:1px;background:#c8c8c8"></div>
<div class="c" style="left:16px;top:473px;width:73px;text-align:right;padding-right:2px;color:#000">10973</div>
<div class="c" style="left:90px;top:473px;width:74px;text-align:right;padding-right:2px;color:#000">53413</div>
<div class="c" style="left:165px;top:473px;width:63px;text-align:right;padding-right:2px;color:#000">10134</div>
<div class="c" style="left:229px;top:473px;width:60px;text-align:left;padding-left:3px;color:#000;letter-spacing:-0.35px">07-31-08</div>
<div class="c" style="left:290px;top:473px;width:60px;text-align:right;padding-right:2px;color:#000">1.0</div>
<div class="c" style="left:351px;top:473px;width:74px;text-align:right;padding-right:2px;color:#000">35.40</div>
<div class="c" style="left:426px;top:473px;width:61px;text-align:right;padding-right:2px;color:#000">.00</div>
<div class="c" style="left:488px;top:473px;width:67px;text-align:right;padding-right:2px;color:#000">35.40</div>
<div class="c" style="left:556px;top:473px;width:67px;text-align:right;padding-right:2px;color:#000">.00</div>
<div class="a" style="left:16px;top:488px;width:662px;height:1px;background:#c8c8c8"></div>
<div class="c" style="left:16px;top:490px;width:73px;text-align:right;padding-right:2px;color:#000">10973</div>
<div class="c" style="left:90px;top:490px;width:74px;text-align:right;padding-right:2px;color:#000">53414</div>
<div class="c" style="left:165px;top:490px;width:63px;text-align:right;padding-right:2px;color:#000">10142</div>
<div class="c" style="left:229px;top:490px;width:60px;text-align:left;padding-left:3px;color:#000;letter-spacing:-0.35px">07-31-08</div>
<div class="c" style="left:290px;top:490px;width:60px;text-align:right;padding-right:2px;color:#000">1.0</div>
<div class="c" style="left:351px;top:490px;width:74px;text-align:right;padding-right:2px;color:#000">2.00</div>
<div class="c" style="left:426px;top:490px;width:61px;text-align:right;padding-right:2px;color:#000">.00</div>
<div class="c" style="left:488px;top:490px;width:67px;text-align:right;padding-right:2px;color:#000">2.00</div>
<div class="c" style="left:556px;top:490px;width:67px;text-align:right;padding-right:2px;color:#000">.00</div>
<div class="a" style="left:16px;top:505px;width:662px;height:1px;background:#c8c8c8"></div>
<div class="c" style="left:16px;top:507px;width:73px;text-align:right;padding-right:2px;color:#000">10973</div>
<div class="c" style="left:90px;top:507px;width:74px;text-align:right;padding-right:2px;color:#000">53415</div>
<div class="c" style="left:165px;top:507px;width:63px;text-align:right;padding-right:2px;color:#000">10156</div>
<div class="c" style="left:229px;top:507px;width:60px;text-align:left;padding-left:3px;color:#000;letter-spacing:-0.35px">07-31-08</div>
<div class="c" style="left:290px;top:507px;width:60px;text-align:right;padding-right:2px;color:#000">1.0</div>
<div class="c" style="left:351px;top:507px;width:74px;text-align:right;padding-right:2px;color:#000">3.23</div>
<div class="c" style="left:426px;top:507px;width:61px;text-align:right;padding-right:2px;color:#000">.00</div>
<div class="c" style="left:488px;top:507px;width:67px;text-align:right;padding-right:2px;color:#000">3.23</div>
<div class="c" style="left:556px;top:507px;width:67px;text-align:right;padding-right:2px;color:#000">.00</div>
<div class="a" style="left:16px;top:522px;width:662px;height:1px;background:#c8c8c8"></div>
<div class="c" style="left:16px;top:524px;width:73px;text-align:right;padding-right:2px;color:#000">10973</div>
<div class="c" style="left:90px;top:524px;width:74px;text-align:right;padding-right:2px;color:#000">53416</div>
<div class="c" style="left:165px;top:524px;width:63px;text-align:right;padding-right:2px;color:#000">10158</div>
<div class="c" style="left:229px;top:524px;width:60px;text-align:left;padding-left:3px;color:#000;letter-spacing:-0.35px">07-31-08</div>
<div class="c" style="left:290px;top:524px;width:60px;text-align:right;padding-right:2px;color:#000">1.0</div>
<div class="c" style="left:351px;top:524px;width:74px;text-align:right;padding-right:2px;color:#000">6.95</div>
<div class="c" style="left:426px;top:524px;width:61px;text-align:right;padding-right:2px;color:#000">.00</div>
<div class="c" style="left:488px;top:524px;width:67px;text-align:right;padding-right:2px;color:#000">6.95</div>
<div class="c" style="left:556px;top:524px;width:67px;text-align:right;padding-right:2px;color:#000">.00</div>
<div class="a" style="left:16px;top:539px;width:662px;height:1px;background:#c8c8c8"></div>
<div class="c" style="left:16px;top:541px;width:73px;text-align:right;padding-right:2px;color:#000">10973</div>
<div class="c" style="left:90px;top:541px;width:74px;text-align:right;padding-right:2px;color:#000">53417</div>
<div class="c" style="left:165px;top:541px;width:63px;text-align:right;padding-right:2px;color:#000">10201</div>
<div class="c" style="left:229px;top:541px;width:60px;text-align:left;padding-left:3px;color:#000;letter-spacing:-0.35px">07-31-08</div>
<div class="c" style="left:290px;top:541px;width:60px;text-align:right;padding-right:2px;color:#000">1.0</div>
<div class="c" style="left:351px;top:541px;width:74px;text-align:right;padding-right:2px;color:#000">2.00</div>
<div class="c" style="left:426px;top:541px;width:61px;text-align:right;padding-right:2px;color:#000">.00</div>
<div class="c" style="left:488px;top:541px;width:67px;text-align:right;padding-right:2px;color:#000">2.00</div>
<div class="c" style="left:556px;top:541px;width:67px;text-align:right;padding-right:2px;color:#000">.00</div>
<div class="a" style="left:16px;top:556px;width:662px;height:1px;background:#c8c8c8"></div>
<div class="a" style="left:89px;top:132px;width:1px;height:425px;background:#c8c8c8"></div>
<div class="a" style="left:164px;top:132px;width:1px;height:425px;background:#c8c8c8"></div>
<div class="a" style="left:228px;top:132px;width:1px;height:425px;background:#c8c8c8"></div>
<div class="a" style="left:289px;top:132px;width:1px;height:425px;background:#c8c8c8"></div>
<div class="a" style="left:350px;top:132px;width:1px;height:425px;background:#c8c8c8"></div>
<div class="a" style="left:425px;top:132px;width:1px;height:425px;background:#c8c8c8"></div>
<div class="a" style="left:487px;top:132px;width:1px;height:425px;background:#c8c8c8"></div>
<div class="a" style="left:555px;top:132px;width:1px;height:425px;background:#c8c8c8"></div>
<div class="a" style="left:623px;top:132px;width:1px;height:425px;background:#c8c8c8"></div>
<div class="a" style="left:678px;top:132px;width:1px;height:425px;background:#c8c8c8"></div>
<div class="a" style="left:767px;top:114px;width:16px;height:457px;background:#f0f0f0"></div>
<div class="a" style="left:767px;top:114px;width:15px;height:17px;background:#dadada"></div>
<div class="a" style="left:767px;top:131px;width:15px;height:17px;background:#bcbcbc"></div>
<svg class="a" style="left:767px;top:114px" width="15" height="17" viewBox="767 114 15 17"><path d="M771 124.6 L774.5 120 L778 124.6 L778 126 L776.6 126 L774.5 123 L772.4 126 L771 126 Z" fill="#000"/></svg>
<svg class="a" style="left:767px;top:554px" width="15" height="17" viewBox="767 554 15 17"><path d="M771 561.4 L774.5 566 L778 561.4 L778 560 L776.6 560 L774.5 563 L772.4 560 L771 560 Z" fill="#606060"/></svg>
<div class="a" style="left:1px;top:575px;width:783px;height:1px;background:#a0a0a0"></div>
<div class="a" style="left:1px;top:591px;width:784px;height:1px;background:#fff"></div>
<svg class="a" style="left:770px;top:577px" width="14" height="14" viewBox="770 577 14 14" shape-rendering="crispEdges"><rect x="772" y="590" width="1" height="1" fill="#fff"/><rect x="773" y="589" width="1" height="1" fill="#fff"/><rect x="773" y="590" width="1" height="1" fill="#a0a0a0"/><rect x="774" y="588" width="1" height="1" fill="#fff"/><rect x="774" y="589" width="1" height="1" fill="#a0a0a0"/><rect x="774" y="590" width="1" height="1" fill="#a0a0a0"/><rect x="775" y="587" width="1" height="1" fill="#fff"/><rect x="775" y="588" width="1" height="1" fill="#a0a0a0"/><rect x="775" y="589" width="1" height="1" fill="#a0a0a0"/><rect x="776" y="586" width="1" height="1" fill="#fff"/><rect x="776" y="587" width="1" height="1" fill="#a0a0a0"/><rect x="776" y="588" width="1" height="1" fill="#a0a0a0"/><rect x="776" y="590" width="1" height="1" fill="#fff"/><rect x="777" y="585" width="1" height="1" fill="#fff"/><rect x="777" y="586" width="1" height="1" fill="#a0a0a0"/><rect x="777" y="587" width="1" height="1" fill="#a0a0a0"/><rect x="777" y="589" width="1" height="1" fill="#fff"/><rect x="777" y="590" width="1" height="1" fill="#a0a0a0"/><rect x="778" y="584" width="1" height="1" fill="#fff"/><rect x="778" y="585" width="1" height="1" fill="#a0a0a0"/><rect x="778" y="586" width="1" height="1" fill="#a0a0a0"/><rect x="778" y="588" width="1" height="1" fill="#fff"/><rect x="778" y="589" width="1" height="1" fill="#a0a0a0"/><rect x="778" y="590" width="1" height="1" fill="#a0a0a0"/><rect x="779" y="583" width="1" height="1" fill="#fff"/><rect x="779" y="584" width="1" height="1" fill="#a0a0a0"/><rect x="779" y="585" width="1" height="1" fill="#a0a0a0"/><rect x="779" y="587" width="1" height="1" fill="#fff"/><rect x="779" y="588" width="1" height="1" fill="#a0a0a0"/><rect x="779" y="589" width="1" height="1" fill="#a0a0a0"/><rect x="780" y="582" width="1" height="1" fill="#fff"/><rect x="780" y="583" width="1" height="1" fill="#a0a0a0"/><rect x="780" y="584" width="1" height="1" fill="#a0a0a0"/><rect x="780" y="586" width="1" height="1" fill="#fff"/><rect x="780" y="587" width="1" height="1" fill="#a0a0a0"/><rect x="780" y="588" width="1" height="1" fill="#a0a0a0"/><rect x="780" y="590" width="1" height="1" fill="#fff"/><rect x="781" y="581" width="1" height="1" fill="#fff"/><rect x="781" y="582" width="1" height="1" fill="#a0a0a0"/><rect x="781" y="583" width="1" height="1" fill="#a0a0a0"/><rect x="781" y="585" width="1" height="1" fill="#fff"/><rect x="781" y="586" width="1" height="1" fill="#a0a0a0"/><rect x="781" y="587" width="1" height="1" fill="#a0a0a0"/><rect x="781" y="589" width="1" height="1" fill="#fff"/><rect x="781" y="590" width="1" height="1" fill="#a0a0a0"/><rect x="782" y="580" width="1" height="1" fill="#fff"/><rect x="782" y="581" width="1" height="1" fill="#a0a0a0"/><rect x="782" y="582" width="1" height="1" fill="#a0a0a0"/><rect x="782" y="584" width="1" height="1" fill="#fff"/><rect x="782" y="585" width="1" height="1" fill="#a0a0a0"/><rect x="782" y="586" width="1" height="1" fill="#a0a0a0"/><rect x="782" y="588" width="1" height="1" fill="#fff"/><rect x="782" y="589" width="1" height="1" fill="#a0a0a0"/><rect x="782" y="590" width="1" height="1" fill="#a0a0a0"/><rect x="783" y="579" width="1" height="1" fill="#fff"/><rect x="783" y="580" width="1" height="1" fill="#a0a0a0"/><rect x="783" y="581" width="1" height="1" fill="#a0a0a0"/><rect x="783" y="583" width="1" height="1" fill="#fff"/><rect x="783" y="584" width="1" height="1" fill="#a0a0a0"/><rect x="783" y="585" width="1" height="1" fill="#a0a0a0"/><rect x="783" y="587" width="1" height="1" fill="#fff"/><rect x="783" y="588" width="1" height="1" fill="#a0a0a0"/><rect x="783" y="589" width="1" height="1" fill="#a0a0a0"/></svg>
</body></html>
